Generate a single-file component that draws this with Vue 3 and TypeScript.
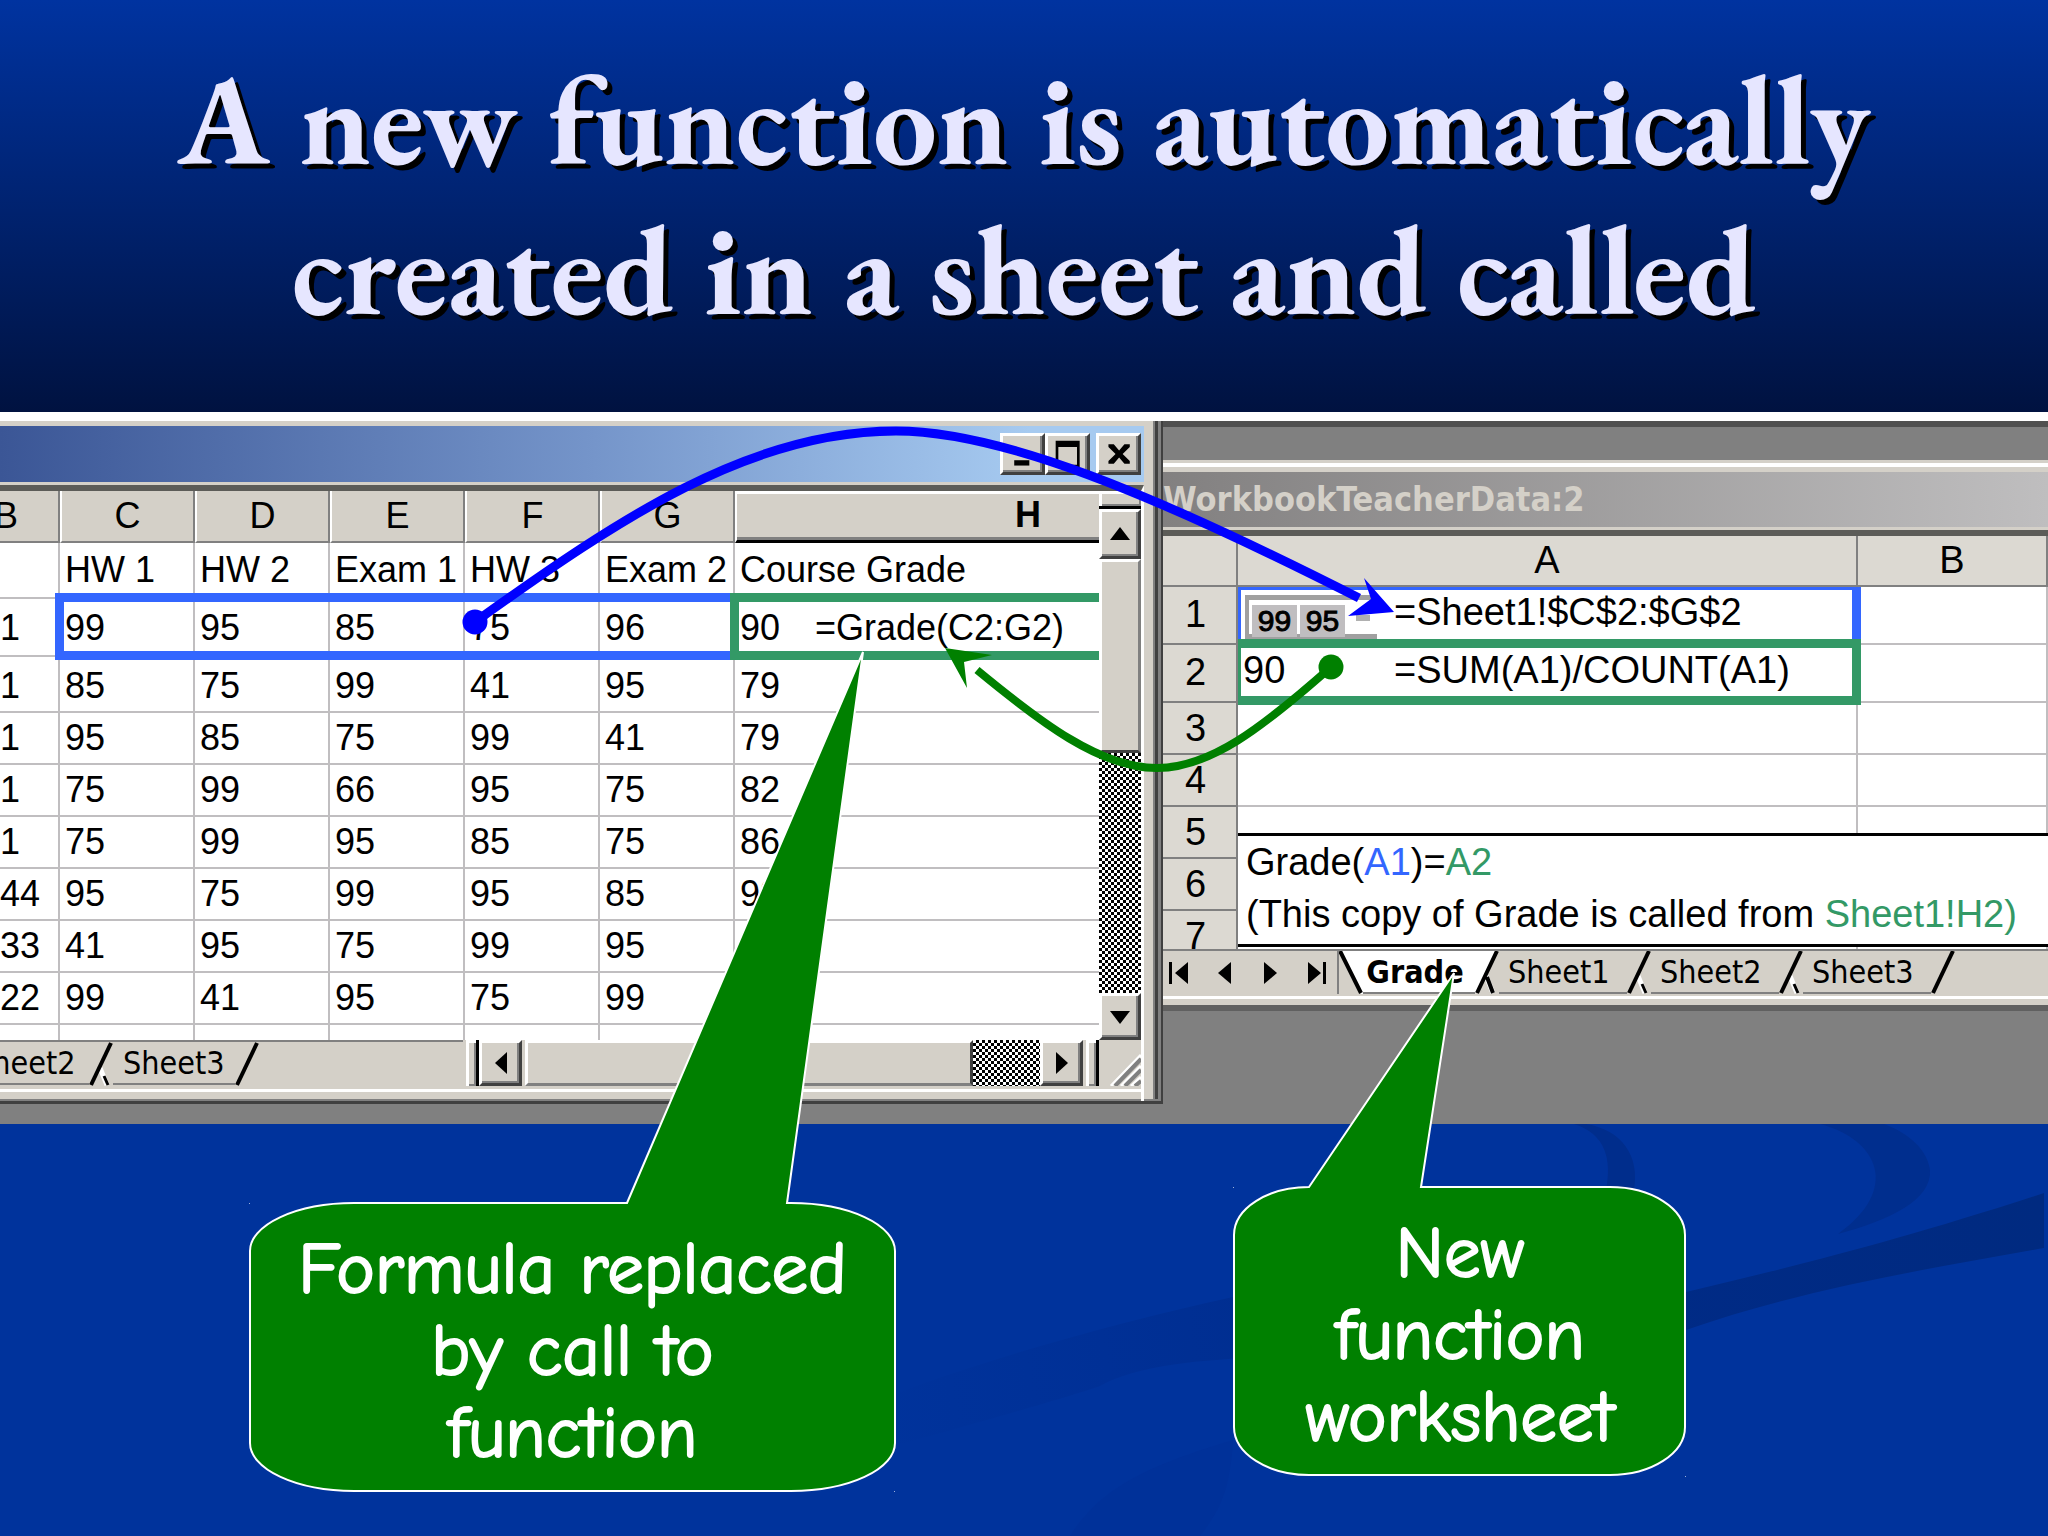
<script setup lang="ts">
interface Cell {
  text: string
  formula?: string
}

const columns: string[] = ['B', 'C', 'D', 'E', 'F', 'G', 'H']

const rows: Cell[][] = [
  ['', 'HW 1', 'HW 2', 'Exam 1', 'HW 3', 'Exam 2', 'Course Grade'],
  ['1', '99', '95', '85', '75', '96', '90'],
  ['1', '85', '75', '99', '41', '95', '79'],
  ['1', '95', '85', '75', '99', '41', '79'],
  ['1', '75', '99', '66', '95', '75', '82'],
  ['1', '75', '99', '95', '85', '75', '86'],
  ['44', '95', '75', '99', '95', '85', '92'],
  ['33', '41', '95', '75', '99', '95', ''],
  ['22', '99', '41', '95', '75', '99', ''],
  ['', '', '', '', '', '', ''],
].map((row, r) =>
  row.map((text, c) => (r === 1 && c === 6 ? { text, formula: '=Grade(C2:G2)' } : { text })),
)

const rowNumbers: number[] = [3, 4, 5, 6, 7]
const gradeTabs: string[] = ['Sheet1', 'Sheet2', 'Sheet3']
const dataTabs: string[] = ['Sheet2', 'Sheet3']
</script>

<template>
  <main class="slide">
    <svg class="backdrop" viewBox="0 0 2048 1536" preserveAspectRatio="none" aria-hidden="true">
      <defs>
        <linearGradient id="fade" gradientUnits="userSpaceOnUse" x1="2044" y1="1220" x2="880" y2="1440">
          <stop offset="0" stop-color="#002a80" />
          <stop offset="0.45" stop-color="#002b88" />
          <stop offset="0.8" stop-color="#003096" />
          <stop offset="1" stop-color="#00339c" />
        </linearGradient>
      </defs>
      <path d="M2044 1193C1900 1240 1800 1265 1686 1292C1500 1270 1350 1265 1233 1297C1120 1322 980 1360 880 1400L880 1450C950 1430 1060 1400 1100 1386C1200 1330 1500 1380 1686 1330C1800 1290 1920 1270 2044 1248Z" fill="url(#fade)" />
      <path d="M1233 1440C1140 1468 1100 1490 1070 1536H1200C1220 1510 1230 1490 1233 1440Z" fill="#003199" />
      <path d="M1574 1124C1606 1134 1612 1160 1606 1190L1634 1190C1640 1156 1622 1130 1586 1124Z" fill="#002d8c" />
      <path d="M1820 1124C1880 1140 1900 1190 1838 1234C1890 1220 1932 1200 1930 1170C1926 1144 1900 1130 1884 1124Z" fill="#002e8e" />
    </svg>

    <header class="heading">
      <h1>A new function is automatically<br />created in a sheet and called</h1>
    </header>

    <section class="workspace">
      <section class="data-window" aria-label="Student data">
        <div class="data-title">
          <button type="button" class="win-button" aria-label="Minimize">
            <svg viewBox="0 0 40 36"><path d="M9 25h17v6h-17z" /></svg>
          </button>
          <button type="button" class="win-button" aria-label="Maximize">
            <svg viewBox="0 0 40 36"><path d="M5 3h27v30h-27zM8 10v20h21v-20z" fill-rule="evenodd" /></svg>
          </button>
          <button type="button" class="win-button close" aria-label="Close">
            <svg viewBox="0 0 40 36"><path d="M7 7h6l6 7 6-7h6v3l-8 8 8 8v3h-6l-6-7-6 7h-6v-3l8-8-8-8z" /></svg>
          </button>
        </div>

        <div class="data-body">
          <div class="data-grid">
            <table class="data-table">
              <colgroup>
                <col class="col-b" />
                <col v-for="n in 5" :key="n" class="col-score" />
                <col />
              </colgroup>
              <thead>
                <tr>
                  <th v-for="name in columns" :key="name" scope="col" :class="'head-' + name">{{ name }}</th>
                </tr>
              </thead>
              <tbody>
                <tr v-for="(row, r) in rows" :key="r">
                  <td v-for="(cell, c) in row" :key="c">
                    <template v-if="cell.formula"><span class="result">{{ cell.text }}</span>{{ cell.formula }}</template>
                    <template v-else>{{ cell.text }}</template>
                  </td>
                </tr>
              </tbody>
            </table>
            <div class="range range-input"></div>
            <div class="range range-output"></div>
          </div>

          <div class="vscroll">
            <span class="split-h"></span>
            <button type="button" class="scroll-button up" aria-label="Scroll up">
              <svg viewBox="0 0 20 14"><path d="M10 0L20 13H0z" /></svg>
            </button>
            <span class="vthumb"></span>
            <span class="dither"></span>
            <button type="button" class="scroll-button down" aria-label="Scroll down">
              <svg viewBox="0 0 20 14"><path d="M0 1H20L10 14z" /></svg>
            </button>
          </div>
        </div>

        <div class="data-footer">
          <nav class="data-tabs" aria-label="Data sheets">
            <template v-for="(tab, i) in dataTabs" :key="tab">
              <button type="button" class="tab" :class="{ clipped: i === 0 }">{{ tab }}</button>
              <svg class="slash" viewBox="0 0 24 44">
                <path v-if="i === 0" d="M11 26L18 43" stroke="#fff" stroke-width="5" />
                <path v-if="i === 0" d="M15 34L19 43" stroke="#000" stroke-width="3" />
                <path d="M22 1L2 43" stroke="#000" stroke-width="4" />
              </svg>
            </template>
          </nav>
          <span class="split-v"></span>
          <button type="button" class="scroll-button side" aria-label="Scroll left">
            <svg viewBox="0 0 12 22"><path d="M12 0V22L0 11z" /></svg>
          </button>
          <span class="hthumb"></span>
          <span class="dither hdither"></span>
          <button type="button" class="scroll-button side" aria-label="Scroll right">
            <svg viewBox="0 0 12 22"><path d="M0 0V22L12 11z" /></svg>
          </button>
          <span class="split-v"></span>
          <svg class="grip" viewBox="0 0 42 46">
            <path d="M12 46L42 15M22 46L42 26M32 46L42 37" stroke="#fff" stroke-width="3" />
            <path d="M16 46L42 19M26 46L42 30M36 46L42 41" stroke="#808080" stroke-width="4" />
          </svg>
        </div>
      </section>

      <section class="grade-window" aria-label="Grade function workbook">
        <div class="grade-title">WorkbookTeacherData:2</div>
        <div class="grade-grid">
          <table class="grade-table">
            <colgroup>
              <col class="col-index" />
              <col class="col-a" />
              <col />
            </colgroup>
            <thead>
              <tr>
                <th></th>
                <th scope="col">A</th>
                <th scope="col">B</th>
              </tr>
            </thead>
            <tbody>
              <tr class="tall">
                <th scope="row">1</th>
                <td>
                  <div class="formula-cell">
                    <span class="array"><b>99</b><b>95</b><i></i></span>
                    <span>=Sheet1!$C$2:$G$2</span>
                  </div>
                </td>
                <td></td>
              </tr>
              <tr class="tall">
                <th scope="row">2</th>
                <td>
                  <div class="formula-cell">
                    <span class="value">90</span>
                    <span>=SUM(A1)/COUNT(A1)</span>
                  </div>
                </td>
                <td></td>
              </tr>
              <tr v-for="n in rowNumbers" :key="n">
                <th scope="row">{{ n }}</th>
                <td></td>
                <td></td>
              </tr>
            </tbody>
          </table>
          <div class="ref ref-input"></div>
          <div class="ref ref-output"></div>
          <div class="note">
            <p>Grade(<span class="blue">A1</span>)=<span class="green">A2</span></p>
            <p>(This copy of Grade is called from <span class="green">Sheet1!H2)</span></p>
          </div>
        </div>

        <nav class="grade-tabs" aria-label="Workbook sheets">
          <div class="tab-nav">
            <button type="button" aria-label="First sheet">
              <svg viewBox="0 0 20 22"><path d="M0 0H3V22H0zM19 0V22L6 11z" /></svg>
            </button>
            <button type="button" aria-label="Previous sheet">
              <svg viewBox="0 0 20 22"><path d="M16 0V22L3 11z" /></svg>
            </button>
            <button type="button" aria-label="Next sheet">
              <svg viewBox="0 0 20 22"><path d="M3 0V22L16 11z" /></svg>
            </button>
            <button type="button" aria-label="Last sheet">
              <svg viewBox="0 0 20 22"><path d="M1 0V22L14 11zM16 0H19V22H16z" /></svg>
            </button>
          </div>
          <svg class="slash" viewBox="0 0 24 44">
            <path d="M0 0L22 44H24V0z" fill="#fff" />
            <path d="M1 1L22 43" stroke="#000" stroke-width="4" />
          </svg>
          <button type="button" class="tab active">Grade</button>
          <svg class="slash" viewBox="0 0 24 44">
            <path d="M24 0L0 44V0z" fill="#fff" />
            <path d="M11 26L18 43" stroke="#fff" stroke-width="5" />
            <path d="M12 27L18 43M22 1L2 43" stroke="#000" stroke-width="4" />
          </svg>
          <template v-for="(tab, i) in gradeTabs" :key="tab">
            <button type="button" class="tab">{{ tab }}</button>
            <svg class="slash" viewBox="0 0 24 44">
              <path v-if="i < 2" d="M11 26L18 43" stroke="#fff" stroke-width="5" />
              <path v-if="i < 2" d="M15 34L19 43" stroke="#000" stroke-width="3" />
              <path d="M22 1L2 43" stroke="#000" stroke-width="4" />
            </svg>
          </template>
        </nav>
      </section>
    </section>

    <svg class="drawing" viewBox="0 0 2048 1536" preserveAspectRatio="none" aria-hidden="true">
      <path d="M475 622C620 518 750 431 896 431C1000 431 1150 492 1359 598" fill="none" stroke="#00f" stroke-width="9" />
      <circle cx="475" cy="622" r="12.500" fill="#00f" />
      <path d="M1394 612L1364 578L1371 599L1348 616Z" fill="#00f" />
      <path d="M1331 667C1262 728 1210 768 1157 768C1100 768 1040 722 977 670" fill="none" stroke="#008000" stroke-width="8" />
      <circle cx="1331" cy="667" r="12.500" fill="#008000" />
      <path d="M945 648L992 655L964 662L967 688Z" fill="#008000" />
      <g fill="#008000" stroke="#fff" stroke-width="2">
        <path d="M627 1203L863 652L787 1203H791A104 48 0 0 1 895 1251V1443A104 48 0 0 1 791 1491H354A104 48 0 0 1 250 1443V1251A104 48 0 0 1 354 1203Z" />
        <path d="M1309 1187L1454 973L1421 1187H1610A75 48 0 0 1 1685 1235V1427A75 48 0 0 1 1610 1475H1309A75 48 0 0 1 1234 1427V1235A75 48 0 0 1 1309 1187Z" />
      </g>
      <path d="M249 1203h1v1h-1zM1233 1187h1v1h-1zM894 1491h1v1h-1zM1685 1476h1v1h-1z" fill="#9ab0dc" />
    </svg>

    <section class="callouts">
      <p class="callout formula">Formula replaced<br />by call to<br />function</p>
      <p class="callout worksheet">New<br />function<br />worksheet</p>
    </section>
  </main>
</template>

<style>
body {
  margin: 0;
  background: #00339c;
}
</style>

<style scoped>
.slide {
  position: relative;
  isolation: isolate;
  overflow: hidden;
  min-height: 100vh;
  font-family: "Liberation Sans", Arial, sans-serif;
  color: #000;
}
.slide * {
  box-sizing: border-box;
}
.backdrop,
.drawing {
  position: absolute;
  inset: 0;
  width: 100%;
  height: 100%;
}
.backdrop {
  z-index: -1;
}
button {
  margin: 0;
  padding: 0;
  border: 0;
  background: none;
  font: inherit;
  color: inherit;
}

.heading {
  padding: 44px 0 68px;
  background: linear-gradient(#0033a0, #001240);
  text-align: center;
}
h1 {
  margin: 0;
  font: bold 127px/150px Garamond, "EB Garamond", "Liberation Serif", "Times New Roman", serif;
  color: #e6e6ff;
  text-shadow: 5px 5px 0 #000;
}

.workspace {
  display: flex;
  align-items: flex-start;
  padding: 9px 0 20px;
  background: linear-gradient(#fff 9px, #808080 9px);
}

/* left window */
.data-window {
  flex: 0 0 1163px;
  padding-right: 17px;
  border-right: 2px solid #404040;
  border-bottom: 3px solid #404040;
  background: linear-gradient(90deg, #d4d0c8 7px, #808080 7px, #808080 9px, #404040 9px, #404040 12px, #808080 12px) right / 15px 100% no-repeat, #d4d0c8;
  box-shadow: inset 0 -2px #808080;
}
.data-title {
  display: flex;
  align-items: flex-start;
  justify-content: flex-end;
  height: 56px;
  margin-top: 5px;
  padding: 7px 3px 0 0;
  background: linear-gradient(90deg, #3b5696, #7595ca 52%, #a6caf0 90%);
}
.win-button {
  width: 45px;
  height: 42px;
  padding: 0 0 0 3px;
  background: #d4d0c8;
  border: solid;
  border-width: 3px;
  border-color: #fff #404040 #404040 #fff;
  box-shadow: inset -2px -2px #808080;
}
.win-button svg {
  display: block;
  width: 36px;
  height: 32px;
}
.close {
  margin-left: 6px;
}
.data-body {
  display: flex;
  height: 555px;
  margin-top: 3px;
  border-top: 6px solid #5c5c58;
  border-right: 3px solid #fff;
}
.data-grid {
  position: relative;
  flex: 1;
  overflow: hidden;
  background: #fff;
}
table {
  width: 100%;
  table-layout: fixed;
  border-collapse: separate;
  border-spacing: 0;
  font-size: 36px;
  line-height: 42px;
  white-space: nowrap;
}
th,
td {
  padding: 0 0 4px 5px;
  overflow: hidden;
  vertical-align: bottom;
  border-right: 2px solid #c0bec0;
  border-bottom: 2px solid #c0bec0;
  text-align: left;
}
th {
  padding-left: 0;
  font-weight: normal;
  text-align: center;
  background: #d4d0c8;
  border-color: #808080;
}
.col-b {
  width: 60px;
}
.col-score {
  width: 135px;
}
.data-table td:first-child {
  padding-left: 0;
}
.data-table th {
  height: 52px;
  border-left: 2px solid #fff;
}
.data-table .head-B {
  text-align: left;
  text-indent: -6px;
  border-left: 0;
}
.data-table .head-H {
  padding-right: 58px;
  font-weight: bold;
  text-align: right;
  border-right: 0;
  border-bottom: 3px solid #000;
  box-shadow: inset 0 3px #fff, inset 0 -3px #808080;
}
.data-table td:last-child {
  border-right: 0;
}
.data-table td {
  height: 52px;
}
.data-table tbody tr:nth-child(1) td,
.data-table tbody tr:nth-child(3) td {
  height: 56px;
}
.data-table tbody tr:nth-child(1) td,
.data-table tbody tr:nth-child(2) td {
  padding-bottom: 6px;
}
.data-table tbody tr:nth-child(2) td {
  height: 58px;
}
.result {
  display: inline-block;
  width: 75px;
}
.range {
  position: absolute;
  top: 102px;
  height: 67px;
  border: 9px solid #3366ff;
}
.range-input {
  left: 55px;
  width: 683px;
  border-right-width: 0;
}
.range-output {
  left: 730px;
  right: 0;
  border-color: #339966;
  border-right-width: 0;
}

.vscroll {
  display: flex;
  flex-direction: column;
  width: 42px;
  background: #d4d0c8;
}
.split-h {
  height: 18px;
  border-bottom: 3px solid #000;
  box-shadow: inset 3px 3px #fff, inset -2px -2px #808080;
}
.scroll-button {
  display: flex;
  align-items: center;
  justify-content: center;
  background: #d4d0c8;
  border: solid;
  border-width: 3px;
  border-color: #fff #404040 #404040 #fff;
  box-shadow: inset -2px -2px #808080;
}
.up {
  height: 50px;
}
.down {
  height: 47px;
}
.up svg,
.down svg {
  width: 20px;
  height: 14px;
}
.vthumb {
  height: 194px;
  border: solid;
  border-width: 3px;
  border-color: #fff #808080 #404040 #fff;
}
.dither {
  flex: 1;
  background: conic-gradient(#000 25%, #fff 0 50%, #000 0 75%, #fff 0) 0 0 / 6px 6px;
}

.data-footer {
  display: flex;
  align-items: flex-start;
  height: 61px;
  border-right: 3px solid #fff;
  background: linear-gradient(#fff, #fff) 0 49px / 100% 3px no-repeat;
}
.data-tabs {
  display: flex;
  width: 463px;
  height: 46px;
  overflow: hidden;
  border-top: 2px solid #808080;
}
.tab {
  flex: none;
  width: 128px;
  height: 43px;
  padding-left: 9px;
  font: 32px/38px "DejaVu Sans Condensed", "DejaVu Sans", sans-serif;
  text-align: left;
  border-bottom: 2px solid #808080;
}
.data-tabs .tab {
  width: 122px;
  padding-left: 10px;
}
.data-tabs .clipped {
  margin-left: -33px;
  padding-left: 7px;
}
.slash {
  flex: none;
  width: 24px;
  height: 44px;
}
.split-v {
  width: 13px;
  height: 46px;
  margin-left: 3px;
  border-right: 3px solid #000;
  box-shadow: inset 3px 3px #fff, inset -2px -2px #808080;
}
.side {
  width: 43px;
  height: 46px;
}
.side svg {
  width: 12px;
  height: 22px;
}
.hthumb {
  flex: 1;
  height: 46px;
  margin-left: 3px;
  border: solid;
  border-width: 3px;
  border-color: #fff #404040 #808080 #fff;
}
.hdither {
  flex: 0 0 67px;
  height: 46px;
}
.grip {
  width: 42px;
  height: 46px;
}

/* right window */
.grade-window {
  flex: 1;
  min-width: 0;
  border-top: 6px solid #505050;
  border-bottom: 6px solid #606060;
  background: linear-gradient(#808080 33px, #d4d0c8 33px, #d4d0c8 36px, #fff 36px, #fff 40px, #d4d0c8 40px);
}
.grade-title {
  margin-top: 45px;
  height: 55px;
  overflow: hidden;
  background: linear-gradient(90deg, #828080, #bfbebf);
  color: #d4d0c8;
  font: bold 34px/54px "DejaVu Sans Condensed", "DejaVu Sans", sans-serif;
}
.grade-grid {
  position: relative;
  height: 419px;
  margin-top: 3px;
  overflow: hidden;
  border-top: 6px solid #5c5c58;
  background: #fff;
}
.grade-table {
  font-size: 38px;
}
.grade-table th,
.grade-table td {
  height: 52px;
  padding-bottom: 4px;
}
.grade-table tbody th {
  padding-right: 8px;
}
.grade-table th {
  background: #dcd9d2;
}
.grade-table thead th {
  height: 51px;
}
.grade-table .tall th,
.grade-table .tall td {
  height: 58px;
  padding-bottom: 8px;
}
.col-index {
  width: 75px;
}
.col-a {
  width: 620px;
}
.formula-cell {
  display: flex;
  align-items: center;
  height: 46px;
}
.value {
  width: 151px;
}
.array {
  display: flex;
  gap: 3px;
  width: 132px;
  height: 44px;
  margin: 10px 17px 0 2px;
  padding: 5px 0 0 3px;
  border: solid #a0a0a0;
  border-width: 5px 0 5px 4px;
}
.array b {
  width: 45px;
  height: 32px;
  font: 30px/32px "Liberation Sans", Arial, sans-serif;
  text-align: center;
  -webkit-text-stroke: 1px #000;
  background: #c0bec0;
}
.array i {
  width: 14px;
  height: 6px;
  margin: 10px 0 0 8px;
  background: #b0b0b0;
}
.ref {
  position: absolute;
  left: 75px;
  width: 623px;
}
.ref-input {
  top: 51px;
  height: 61px;
  border: solid #3366ff;
  border-width: 3px 9px 0 3px;
}
.ref-output {
  top: 103px;
  height: 66px;
  border: solid #339966;
  border-width: 9px 9px 9px 3px;
}
.note {
  position: absolute;
  top: 297px;
  left: 75px;
  right: 0;
  height: 114px;
  padding: 0 8px;
  border: solid #000;
  border-width: 3px 0;
  background: #fff;
  font-size: 38px;
  line-height: 52px;
  white-space: nowrap;
}
.note p {
  margin: 0;
}
.blue {
  color: #3366ff;
}
.green {
  color: #339966;
}
.grade-tabs {
  display: flex;
  height: 56px;
  overflow: hidden;
  border-top: 2px solid #808080;
  background: linear-gradient(#fff, #fff) 0 45px / 100% 3px no-repeat, #d4d0c8;
}
.grade-tabs .slash {
  margin-top: -1px;
}
.tab-nav {
  display: flex;
  flex: none;
  gap: 26px;
  width: 176px;
  height: 43px;
  padding: 0 6px;
  border-right: 2px solid #808080;
}
.tab-nav svg {
  display: block;
  width: 20px;
  height: 22px;
}
.tab.active {
  width: 112px;
  padding: 0 8px 0 0;
  font-weight: bold;
  text-align: center;
  background: #fff;
}

/* callout captions */
.callouts {
  position: relative;
  display: flex;
  align-items: flex-start;
  padding: 104px 0 62px 250px;
}
.callout {
  margin: 0;
  color: #fff;
  font: 73px/82px "Comic Sans MS", "Comic Neue", "Open Sans", sans-serif;
  text-align: center;
  -webkit-text-stroke: 2px #fff;
}
.formula {
  width: 645px;
}
.worksheet {
  width: 452px;
  margin: -16px 0 0 339px;
}
</style>
